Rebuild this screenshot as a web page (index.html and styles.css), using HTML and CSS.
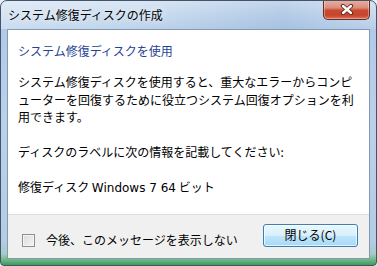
FILE: index.html
```html
<!DOCTYPE html>
<html lang="ja">
<head>
<meta charset="utf-8">
<title>システム修復ディスクの作成</title>
<link rel="stylesheet" href="styles.css">
</head>
<body>
<div class="window">
  <div class="titlebar">
    <span class="title">システム修復ディスクの作成</span>
    <div class="close">
      <svg width="14" height="11" viewBox="0 0 14 11">
        <path d="M3 2 L11 9 M11 2 L3 9" stroke="#5a2418" stroke-width="4.2" stroke-linecap="round" fill="none"/>
        <path d="M3 2 L11 9 M11 2 L3 9" stroke="#ffffff" stroke-width="2.4" stroke-linecap="round" fill="none"/>
      </svg>
    </div>
  </div>
  <div class="client">
    <div class="content">
      <p class="heading">システム修復ディスクを使用</p>
      <p class="para">システム修復ディスクを使用すると、重大なエラーからコンピ<br>ューターを回復するために役立つシステム回復オプションを利<br>用できます。</p>
      <p class="para">ディスクのラベルに次の情報を記載してください:</p>
      <p class="para">修復ディスク <span class="latin">Windows 7 64</span> ビット</p>
    </div>
    <div class="footer">
      <label class="check"><span class="box"></span><span class="check-label">今後、このメッセージを表示しない</span></label>
      <button class="btn">閉じる(C)</button>
    </div>
  </div>
</div>
</body>
</html>
```

FILE: styles.css
```css
* { box-sizing: border-box; }
html, body {
  margin: 0;
  padding: 0;
  background: #e9eef4;
}
body {
  width: 377px;
  height: 266px;
  font-family: "Noto Sans CJK JP", "Noto Sans", sans-serif;
  font-size: 12px;
  color: #000;
}
.window {
  position: relative;
  width: 377px;
  height: 266px;
  border: 1px solid #42546a;
  border-radius: 7px 7px 4px 4px;
  background: linear-gradient(to bottom, #d2e1f2 0px, #c0d5ed 14px, #b1cae7 28px, #bad1ea 120px, #b3cde4 240px, #a6cbc8 253px, #6cb783 259px, #3f9a5c 264px);
  display: flex;
  flex-direction: column;
  overflow: hidden;
}
.titlebar {
  height: 28px;
  display: flex;
  align-items: center;
  padding: 0 0 2px 7px;
  background: linear-gradient(to right, rgba(255,255,255,0.35) 0, rgba(255,255,255,0.15) 40%, rgba(90,130,180,0.12) 75%, rgba(255,255,255,0.1) 100%);
}
.title {
  line-height: 17px;
  color: #000;
  text-shadow: 0 0 6px rgba(255,255,255,0.9);
}
.close {
  position: absolute;
  top: -1px;
  right: 6px;
  width: 47px;
  height: 20px;
  border: 1px solid #6b2a1f;
  border-top: none;
  border-radius: 0 0 5px 5px;
  background: linear-gradient(to bottom, #eab1a4 0, #dd8d7c 40%, #c94a33 55%, #c7452d 80%, #d8735a 100%);
  box-shadow: inset 0 0 0 1px rgba(255,255,255,0.35);
  display: flex;
  align-items: center;
  justify-content: center;
}
.close svg { display: block; margin-top: -1px; }
.client {
  margin: 0 6px 6px 6px;
  height: 230px;
  border: 1px solid #8299b6;
  background: #fff;
  display: flex;
  flex-direction: column;
}
.content {
  flex: 1;
  padding: 12px 10px 0 10px;
  white-space: nowrap;
}
.heading {
  margin: 0;
  line-height: 17px;
  color: #1f4495;
}
.para {
  margin: 14px 0 0 0;
  line-height: 17.5px;
}
.para + .para { margin-top: 17.5px; }
.latin {
  font-family: "DejaVu Sans", "Noto Sans", sans-serif;
  font-size: 12px;
}
.footer {
  height: 44px;
  border-top: 1px solid #dfdfdf;
  background: #f0f0f0;
  display: flex;
  align-items: flex-start;
  justify-content: space-between;
  padding: 0 11px 0 14px;
}
.check {
  display: flex;
  align-items: center;
  margin-top: 16px;
}
.box {
  width: 13px;
  height: 13px;
  border: 1px solid #8e8f8f;
  background: linear-gradient(135deg, #dcdcdc 0, #f4f4f4 100%);
  box-shadow: inset 0 0 0 1px #f4f4f4;
  margin-top: 2px;
}
.check-label {
  margin-left: 11px;
  line-height: 17px;
}
.btn {
  margin-top: 9px;
  width: 95px;
  height: 23px;
  border: 1px solid #3c7fb1;
  border-radius: 3px;
  background: linear-gradient(to bottom, #eaf6fd 0, #d9f0fc 50%, #bee6fd 51%, #a7d9f5 100%);
  box-shadow: inset 0 0 0 1px rgba(255,255,255,0.7);
  font-family: "Noto Sans CJK JP", "Noto Sans", sans-serif;
  font-size: 12px;
  color: #000;
  line-height: 17px;
  padding: 0 0 2px 0;
}
```
